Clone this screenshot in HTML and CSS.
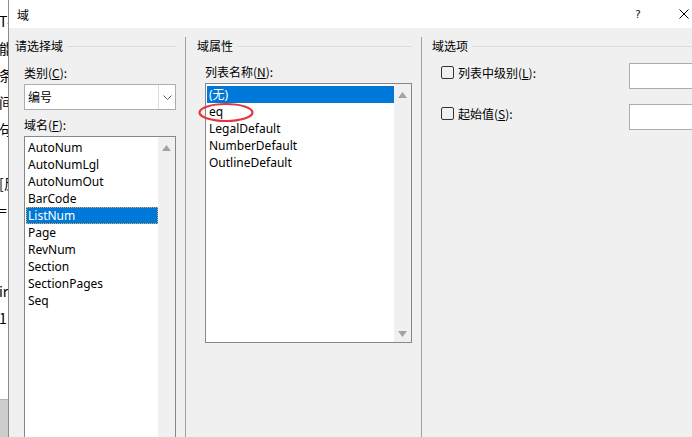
FILE: index.html
```html
<!DOCTYPE html>
<html lang="zh-CN">
<head>
  <meta charset="UTF-8">
  <meta name="viewport" content="width=device-width, initial-scale=1.0">
  <title>域</title>
  <link rel="stylesheet" href="styles.css">
</head>
<body>
  <div class="screen">
    <div class="doc">
      <div class="doc-text">
        <div>T4</div>
        <div>能</div>
        <div>条</div>
        <div>间</div>
        <div>句</div>
        <div>&nbsp;</div>
        <div>[反</div>
        <div>=</div>
        <div>&nbsp;</div>
        <div>&nbsp;</div>
        <div>ir</div>
        <div>1</div>
      </div>
      <div class="doc-bar"></div>
    </div>

    <div class="dialog">
      <div class="titlebar">
        <span class="title">域</span>
        <span class="help">?</span>
        <svg class="close" width="10" height="10" viewBox="0 0 10 10">
          <path d="M0.5 0.5 L9.5 9.5 M9.5 0.5 L0.5 9.5" stroke="#000" stroke-width="1" fill="none"/>
        </svg>
      </div>

      <div class="body">
        <div class="col col-fields">
          <div class="group-head"><span>请选择域</span><i></i></div>
          <div class="group">
            <div class="label first">类别(<u>C</u>):</div>
            <div class="combo">
              <span class="combo-value">编号</span>
              <div class="combo-btn">
                <svg width="9" height="5" viewBox="0 0 9 5">
                  <path d="M0.5 0.5 L4.5 4.5 L8.5 0.5" stroke="#606060" stroke-width="1" fill="none"/>
                </svg>
              </div>
            </div>
            <div class="label">域名(<u>F</u>):</div>
            <div class="listbox list-names">
              <ul>
                <li>AutoNum</li>
                <li>AutoNumLgl</li>
                <li>AutoNumOut</li>
                <li>BarCode</li>
                <li class="selected focused">ListNum</li>
                <li>Page</li>
                <li>RevNum</li>
                <li>Section</li>
                <li>SectionPages</li>
                <li>Seq</li>
              </ul>
              <div class="scroll">
                <svg width="9" height="6" viewBox="0 0 9 6"><polygon points="4.5,0 9,6 0,6" fill="#a3a3a3"/></svg>
                <svg width="9" height="6" viewBox="0 0 9 6"><polygon points="0,0 9,0 4.5,6" fill="#a3a3a3"/></svg>
              </div>
            </div>
          </div>
        </div>

        <div class="col col-props">
          <div class="group-head"><span>域属性</span><i></i></div>
          <div class="group">
            <div class="label first">列表名称(<u>N</u>):</div>
            <div class="listbox list-styles">
              <ul>
                <li class="selected">(无)</li>
                <li>eq</li>
                <li>LegalDefault</li>
                <li>NumberDefault</li>
                <li>OutlineDefault</li>
              </ul>
              <div class="scroll">
                <svg width="9" height="6" viewBox="0 0 9 6"><polygon points="4.5,0 9,6 0,6" fill="#a3a3a3"/></svg>
                <svg width="9" height="6" viewBox="0 0 9 6"><polygon points="0,0 9,0 4.5,6" fill="#a3a3a3"/></svg>
              </div>
              <svg class="mark" width="60" height="24" viewBox="0 0 60 24">
                <ellipse cx="29" cy="11.5" rx="26.5" ry="8.5" stroke="#e3353b" stroke-width="2.2" fill="none"/>
              </svg>
            </div>
          </div>
        </div>

        <div class="col col-options">
          <div class="group-head"><span>域选项</span><i></i></div>
          <div class="group">
            <div class="option">
              <span class="check"></span>
              <span class="option-label">列表中级别(<u>L</u>):</span>
              <span class="textbox"></span>
            </div>
            <div class="option">
              <span class="check"></span>
              <span class="option-label">起始值(<u>S</u>):</span>
              <span class="textbox"></span>
            </div>
          </div>
        </div>
      </div>
    </div>
  </div>
</body>
</html>
```

FILE: styles.css
```css
* {
  box-sizing: border-box;
}
html, body {
  margin: 0;
  height: 100%;
}
body {
  font-family: "Noto Sans", "Noto Sans CJK SC", sans-serif;
  font-size: 12px;
  color: #000;
  overflow: hidden;
}
.screen {
  display: flex;
  width: 692px;
  height: 437px;
}

/* document peeking out on the left */
.doc {
  flex: none;
  width: 8px;
  background: #fff;
  display: flex;
  flex-direction: column;
  overflow: hidden;
}
.doc-text {
  flex: 1;
  font-family: "Noto Sans CJK SC", serif;
  font-size: 14px;
  line-height: 27px;
  padding-top: 8px;
  margin-left: -1px;
  white-space: nowrap;
}
.doc-bar {
  height: 38px;
  background: #cdcdcd;
  border-top: 1px solid #b4b4b4;
}

/* dialog */
.dialog {
  flex: 1;
  display: flex;
  flex-direction: column;
  border-left: 1px solid #8c8c8c;
  background: #f0f0f0;
  min-width: 0;
}
.titlebar {
  height: 28px;
  background: #fff;
  display: flex;
  align-items: center;
  padding-left: 8px;
  font-family: "Noto Sans CJK SC", sans-serif;
}
.title {
  font-size: 12px;
}
.help {
  margin-left: auto;
  font-family: "DejaVu Sans", sans-serif;
  font-size: 11px;
  width: 10px;
  text-align: center;
  color: #222;
}
.close {
  margin-left: 36px;
  margin-right: 3px;
}

.body {
  flex: 1;
  display: flex;
  padding-top: 9px;
  min-height: 0;
}
.col {
  flex: none;
  padding-top: 1px;
  border-right: 1px solid #a0a0a0;
  overflow: hidden;
}
.col-fields {
  width: 177px;
  padding-left: 6px;
  padding-right: 9px;
}
.col-props {
  width: 236px;
  padding-left: 11px;
  padding-right: 9px;
}
.col-options {
  flex: 1;
  padding-left: 10px;
  border-right: none;
}
.col-fields .group { padding-left: 9px; }
.col-props .group { padding-left: 8px; }
.col-options .group { padding-left: 9px; }

.group-head {
  display: flex;
  align-items: center;
  gap: 4px;
  line-height: 16px;
  font-family: "Noto Sans CJK SC", sans-serif;
}
.group-head i {
  flex: 1;
  height: 1px;
  background: #dcdcdc;
}

.label {
  line-height: 16px;
  margin-top: 7px;
  font-family: "Noto Sans CJK SC", sans-serif;
}
.label.first {
  margin-top: 11px;
}
.col-props .label.first {
  margin-top: 10px;
}

.combo {
  margin-top: 3px;
  height: 26px;
  display: flex;
  background: #fff;
  border: 1px solid #adadad;
}
.combo-value {
  flex: 1;
  padding-left: 3px;
  line-height: 24px;
  font-family: "Noto Sans CJK SC", sans-serif;
}
.combo-btn {
  width: 17px;
  border-left: 1px solid #dcdcdc;
  display: flex;
  align-items: center;
  justify-content: center;
}

.listbox {
  position: relative;
  margin-top: 3px;
  display: flex;
  background: #fff;
  border: 1px solid #828790;
}
.list-names {
  height: 330px;
}
.list-styles {
  height: 260px;
}
.listbox ul {
  flex: 1;
  list-style: none;
  margin: 0;
  padding: 2px 0 0 1px;
}
.listbox li {
  height: 17px;
  line-height: 17px;
  padding-left: 2px;
  white-space: nowrap;
}
.listbox li.selected {
  background: #0078d7;
  color: #fff;
}
.listbox li.focused {
  outline: 1px dotted #f0a848;
  outline-offset: -1px;
}
.scroll {
  width: 17px;
  background: #f0f0f0;
  display: flex;
  flex-direction: column;
  justify-content: space-between;
  padding: 8px 4px 5px;
}
.scroll svg {
  display: block;
}
.mark {
  position: absolute;
  left: -9px;
  top: 17px;
}

.option {
  display: flex;
  align-items: flex-start;
  height: 26px;
  margin-top: 9px;
}
.option + .option {
  margin-top: 15px;
}
.check {
  flex: none;
  width: 13px;
  height: 13px;
  margin-top: 3px;
  border: 1px solid #333;
  border-radius: 2px;
}
.option-label {
  flex: none;
  width: 171px;
  margin-left: 4px;
  margin-top: 2px;
  line-height: 16px;
  font-family: "Noto Sans CJK SC", sans-serif;
}
.textbox {
  flex: none;
  width: 80px;
  height: 26px;
  background: #fff;
  border: 1px solid #adadad;
}
```
